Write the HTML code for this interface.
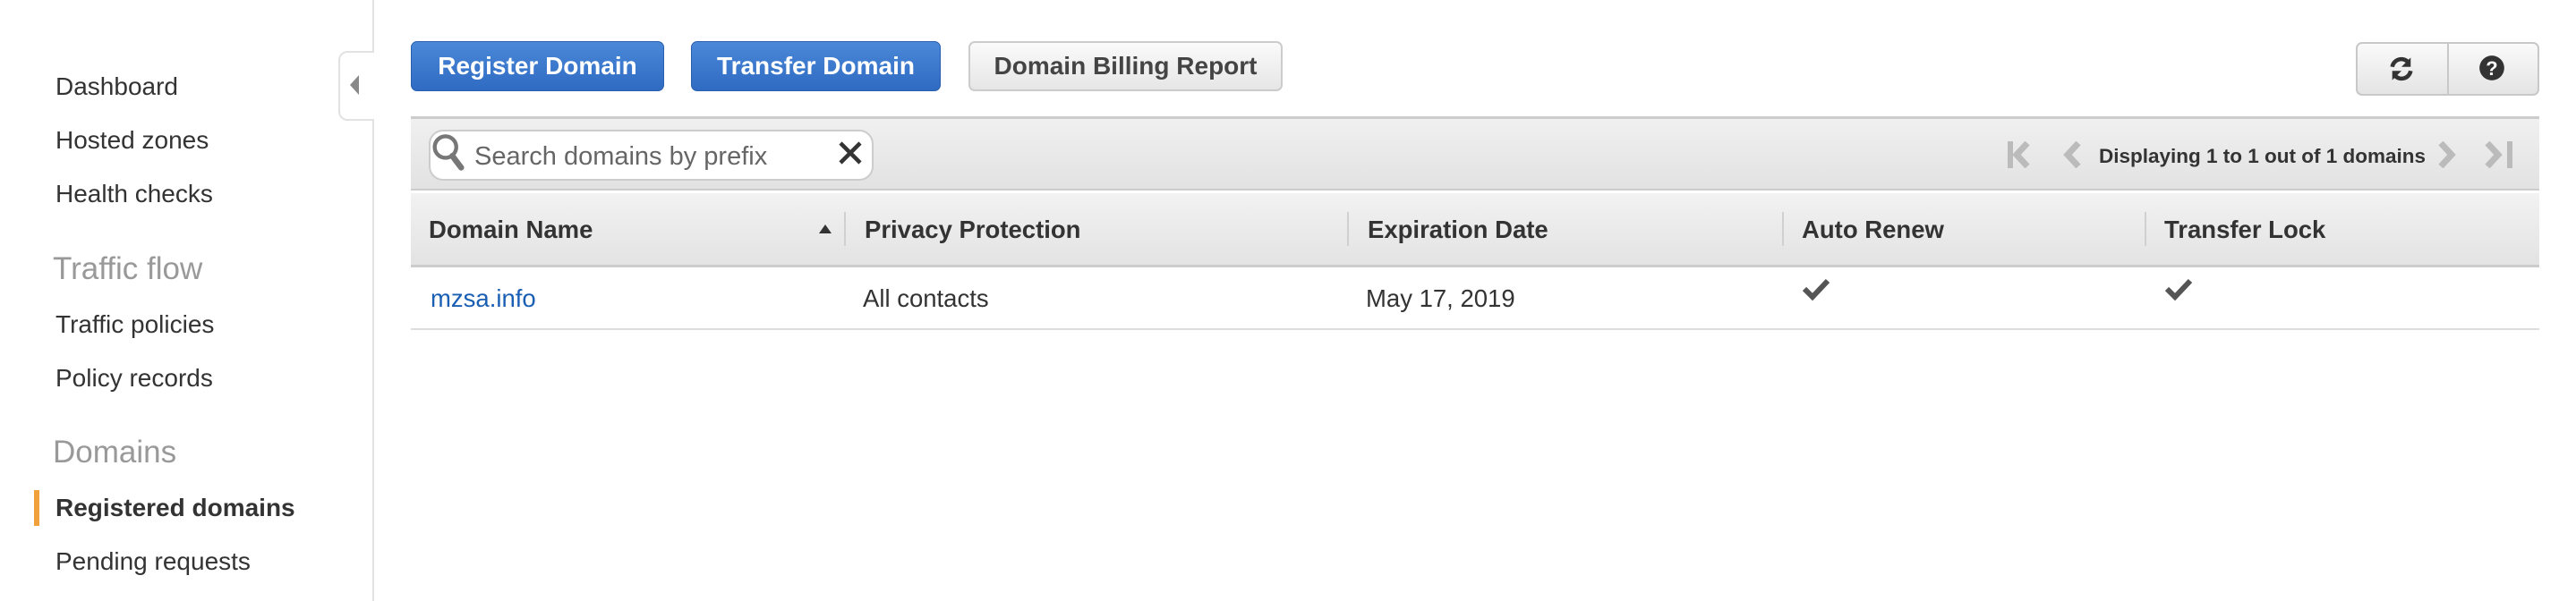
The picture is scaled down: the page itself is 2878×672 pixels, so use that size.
<!DOCTYPE html>
<html><head><meta charset="utf-8"><style>
*{margin:0;padding:0;box-sizing:border-box}
body{width:2878px;height:672px;background:#fff;font-family:"Liberation Sans",Arial,sans-serif;color:#333;position:relative;overflow:hidden}
.a{position:absolute;white-space:nowrap}
.nav{font-size:28px;color:#333;left:62px;line-height:1}
.sec{font-size:35px;color:#999;left:59px;line-height:1}
.btn{position:absolute;top:46px;height:56px;border-radius:7px;font-weight:bold;font-size:28px;display:flex;align-items:center;justify-content:center}
.blue{background:linear-gradient(#4a88d8,#2f6bc2);border:1px solid #2a5fae;color:#fff}
.grey{background:linear-gradient(#fafafa,#e6e6e6);border:2px solid #ccc;color:#444}
.th{font-size:27.5px;font-weight:bold;color:#333;top:243px;line-height:1}
.sep{position:absolute;top:237px;width:2px;height:38px;background:#d0d0d0}
.td{font-size:27.5px;top:320px;line-height:1;color:#333}
</style></head><body>
<div class="a" style="left:416px;top:0;width:2px;height:672px;background:#e2e2e2"></div>
<div class="a" style="left:378px;top:57px;width:40px;height:78px;background:#fff;border:2px solid #e2e2e2;border-right:none;border-radius:10px 0 0 10px"></div>
<svg class="a" style="left:391px;top:84px" width="12" height="22"><path d="M10 0 L0 11 L10 22 Z" fill="#888"/></svg>

<div class="a nav" style="top:83px">Dashboard</div>
<div class="a nav" style="top:143px">Hosted zones</div>
<div class="a nav" style="top:203px">Health checks</div>
<div class="a sec" style="top:283px">Traffic flow</div>
<div class="a nav" style="top:349px">Traffic policies</div>
<div class="a nav" style="top:409px">Policy records</div>
<div class="a sec" style="top:488px">Domains</div>
<div class="a" style="left:38px;top:548px;width:6px;height:40px;background:#f0a13c"></div>
<div class="a nav" style="top:554px;font-weight:bold">Registered domains</div>
<div class="a nav" style="top:614px">Pending requests</div>

<div class="btn blue" style="left:459px;width:283px">Register Domain</div>
<div class="btn blue" style="left:772px;width:279px">Transfer Domain</div>
<div class="btn grey" style="left:1082px;width:351px">Domain Billing Report</div>
<div class="a" style="left:2632px;top:47px;width:205px;height:60px;border:2px solid #c8c8c8;border-radius:7px;background:linear-gradient(#fafafa,#e4e4e4)"></div>
<div class="a" style="left:2734px;top:48px;width:2px;height:58px;background:#c8c8c8"></div>
<svg class="a" style="left:2667px;top:61px" width="32" height="32" viewBox="0 0 28 28"><path d="M5 12 A9 9 0 0 1 21 8" fill="none" stroke="#333" stroke-width="4"/><path d="M23 3 L23 12 L14 12 Z" fill="#333"/><path d="M23 16 A9 9 0 0 1 7 20" fill="none" stroke="#333" stroke-width="4"/><path d="M5 25 L5 16 L14 16 Z" fill="#333"/></svg>
<svg class="a" style="left:2769px;top:61px" width="30" height="30" viewBox="0 0 26 26"><circle cx="13" cy="13" r="12" fill="#333"/><text x="13" y="20" font-size="19" font-weight="bold" fill="#fff" text-anchor="middle" font-family="Liberation Sans">?</text></svg>

<div class="a" style="left:459px;top:130px;width:2378px;height:240px;border-top:3px solid #ccc"></div>
<div class="a" style="left:459px;top:133px;width:2378px;height:80px;background:linear-gradient(#f0f0f0,#e2e2e2);border-bottom:2px solid #ccc"></div>
<div class="a" style="left:479px;top:145px;width:497px;height:57px;background:#fff;border:2px solid #ccc;border-radius:16px"></div>
<svg class="a" style="left:481px;top:148px" width="40" height="46" viewBox="0 0 36 42"><circle cx="15" cy="15" r="11" fill="none" stroke="#777" stroke-width="4"/><path d="M22 24 L31 36" stroke="#777" stroke-width="6" stroke-linecap="round"/></svg>
<div class="a" style="left:530px;top:159px;font-size:29px;color:#666">Search domains by prefix</div>
<svg class="a" style="left:936px;top:157px" width="28" height="28"><path d="M3 3 L25 25 M25 3 L3 25" stroke="#333" stroke-width="4.5"/></svg>
<svg class="a" style="left:2243px;top:158px" width="34" height="30"><rect x="0" y="0" width="6" height="30" fill="#bbb"/><path d="M22 2 L10 15 L22 28" fill="none" stroke="#bbb" stroke-width="7"/></svg>
<svg class="a" style="left:2303px;top:158px" width="24" height="30"><path d="M19 2 L7 15 L19 28" fill="none" stroke="#bbb" stroke-width="7"/></svg>
<div class="a" style="left:2345px;top:162px;font-size:22.5px;font-weight:bold;color:#333">Displaying 1 to 1 out of 1 domains</div>
<svg class="a" style="left:2722px;top:158px" width="24" height="30"><path d="M5 2 L17 15 L5 28" fill="none" stroke="#bbb" stroke-width="7"/></svg>
<svg class="a" style="left:2774px;top:158px" width="34" height="30"><path d="M5 2 L17 15 L5 28" fill="none" stroke="#bbb" stroke-width="7"/><rect x="27" y="0" width="6" height="30" fill="#bbb"/></svg>

<div class="a" style="left:459px;top:216px;width:2378px;height:83px;background:linear-gradient(#f2f2f2,#e3e3e3);border-bottom:3px solid #ccc"></div>
<div class="a th" style="left:479px">Domain Name</div>
<svg class="a" style="left:915px;top:251px" width="14" height="10"><path d="M0 10 L7 0 L14 10 Z" fill="#333"/></svg>
<div class="sep" style="left:943px"></div>
<div class="a th" style="left:966px">Privacy Protection</div>
<div class="sep" style="left:1505px"></div>
<div class="a th" style="left:1528px">Expiration Date</div>
<div class="sep" style="left:1991px"></div>
<div class="a th" style="left:2013px">Auto Renew</div>
<div class="sep" style="left:2396px"></div>
<div class="a th" style="left:2418px">Transfer Lock</div>

<div class="a td" style="left:481px;color:#1a5fb4">mzsa.info</div>
<div class="a td" style="left:964px">All contacts</div>
<div class="a td" style="left:1526px">May 17, 2019</div>
<svg class="a" style="left:2013px;top:310px" width="32" height="26"><path d="M3 13 L12 22 L29 4" fill="none" stroke="#555" stroke-width="6"/></svg>
<svg class="a" style="left:2418px;top:310px" width="32" height="26"><path d="M3 13 L12 22 L29 4" fill="none" stroke="#555" stroke-width="6"/></svg>
<div class="a" style="left:459px;top:367px;width:2378px;height:2px;background:#ddd"></div>
</body></html>
